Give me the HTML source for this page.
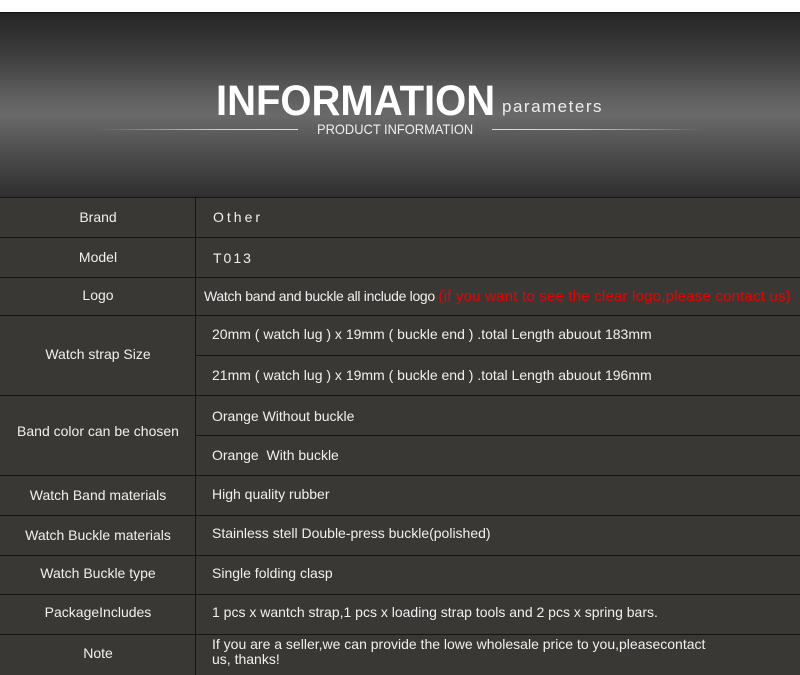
<!DOCTYPE html>
<html><head><style>
*{margin:0;padding:0;box-sizing:border-box}
body{width:800px;height:675px;background:#fff;position:relative;overflow:hidden;font-family:"Liberation Sans",sans-serif;color:#f0f0f0}
#hd{position:absolute;left:0;top:12px;width:800px;height:186px;background:linear-gradient(#262626 0%,#3a3a3a 20%,#5e5e5e 45%,#6a6a6a 55%,#4a4a4a 78%,#2e2e2e 100%);border-top:1px solid #111}
#tb{position:absolute;left:0;top:197px;width:800px;height:478px;background:#3a3835}
.h{position:absolute;height:1px;background:#151515}
.v{position:absolute;left:195px;top:197px;width:1px;height:478px;background:#151515}
.t{position:absolute;font-size:14px;white-space:nowrap;line-height:16px}
.l{left:0;width:196px;text-align:center}
.r{left:212px}
</style></head><body>
<div id="hd">
 <div style="position:absolute;left:216px;top:64px;font-size:43px;font-weight:bold;color:#fff;letter-spacing:0px;transform:scaleX(0.93);transform-origin:left">INFORMATION</div>
 <div style="position:absolute;left:502px;top:84px;font-size:17px;color:#eee;letter-spacing:1.5px">parameters</div>
 <div style="position:absolute;left:317px;top:108px;font-size:14px;color:#eee;transform:scaleX(0.92);transform-origin:left">PRODUCT INFORMATION</div>
 <div style="position:absolute;left:100px;top:116px;width:198px;height:1px;background:linear-gradient(90deg,transparent,#ccc 60%,#ddd)"></div>
 <div style="position:absolute;left:492px;top:116px;width:210px;height:1px;background:linear-gradient(90deg,#ddd,#ccc 40%,transparent)"></div>
</div>
<div id="tb"></div>
<div class="h" style="left:0;top:197px;width:800px"></div>
<div class="h" style="left:0;top:237px;width:800px"></div>
<div class="h" style="left:0;top:277px;width:800px"></div>
<div class="h" style="left:0;top:315px;width:800px"></div>
<div class="h" style="left:196px;top:355px;width:604px"></div>
<div class="h" style="left:0;top:395px;width:800px"></div>
<div class="h" style="left:196px;top:435px;width:604px"></div>
<div class="h" style="left:0;top:475px;width:800px"></div>
<div class="h" style="left:0;top:515px;width:800px"></div>
<div class="h" style="left:0;top:555px;width:800px"></div>
<div class="h" style="left:0;top:594px;width:800px"></div>
<div class="h" style="left:0;top:634px;width:800px"></div>
<div class="v"></div>
<div class="t l" style="top:209px">Brand</div>
<div class="t" style="left:213px;top:209px;letter-spacing:3px">Other</div>
<div class="t l" style="top:249px">Model</div>
<div class="t" style="left:213px;top:250px;letter-spacing:2px">T013</div>
<div class="t l" style="top:287px">Logo</div>
<div class="t" style="left:204px;top:288px;letter-spacing:-0.3px">Watch band and buckle all include logo <span style="color:#e00;font-size:15px;letter-spacing:0.2px">(if you want to see the clear logo,please contact us)</span></div>
<div class="t l" style="top:346px">Watch strap Size</div>
<div class="t r" style="top:326px">20mm ( watch lug ) x 19mm ( buckle end ) .total Length abuout 183mm</div>
<div class="t r" style="top:367px">21mm ( watch lug ) x 19mm ( buckle end ) .total Length abuout 196mm</div>
<div class="t l" style="top:423px">Band color can be chosen</div>
<div class="t r" style="top:408px">Orange Without buckle</div>
<div class="t r" style="top:447px">Orange&nbsp; With buckle</div>
<div class="t l" style="top:487px">Watch Band materials</div>
<div class="t r" style="top:486px">High quality rubber</div>
<div class="t l" style="top:527px">Watch Buckle materials</div>
<div class="t r" style="top:525px">Stainless stell Double-press buckle(polished)</div>
<div class="t l" style="top:565px">Watch Buckle type</div>
<div class="t r" style="top:565px">Single folding clasp</div>
<div class="t l" style="top:604px">PackageIncludes</div>
<div class="t r" style="top:604px">1 pcs x wantch strap,1 pcs x loading strap tools and 2 pcs x spring bars.</div>
<div class="t l" style="top:645px">Note</div>
<div class="t r" style="top:637px;line-height:15px">If you are a seller,we can provide the lowe wholesale price to you,pleasecontact<br>us, thanks!</div>
</body></html>
